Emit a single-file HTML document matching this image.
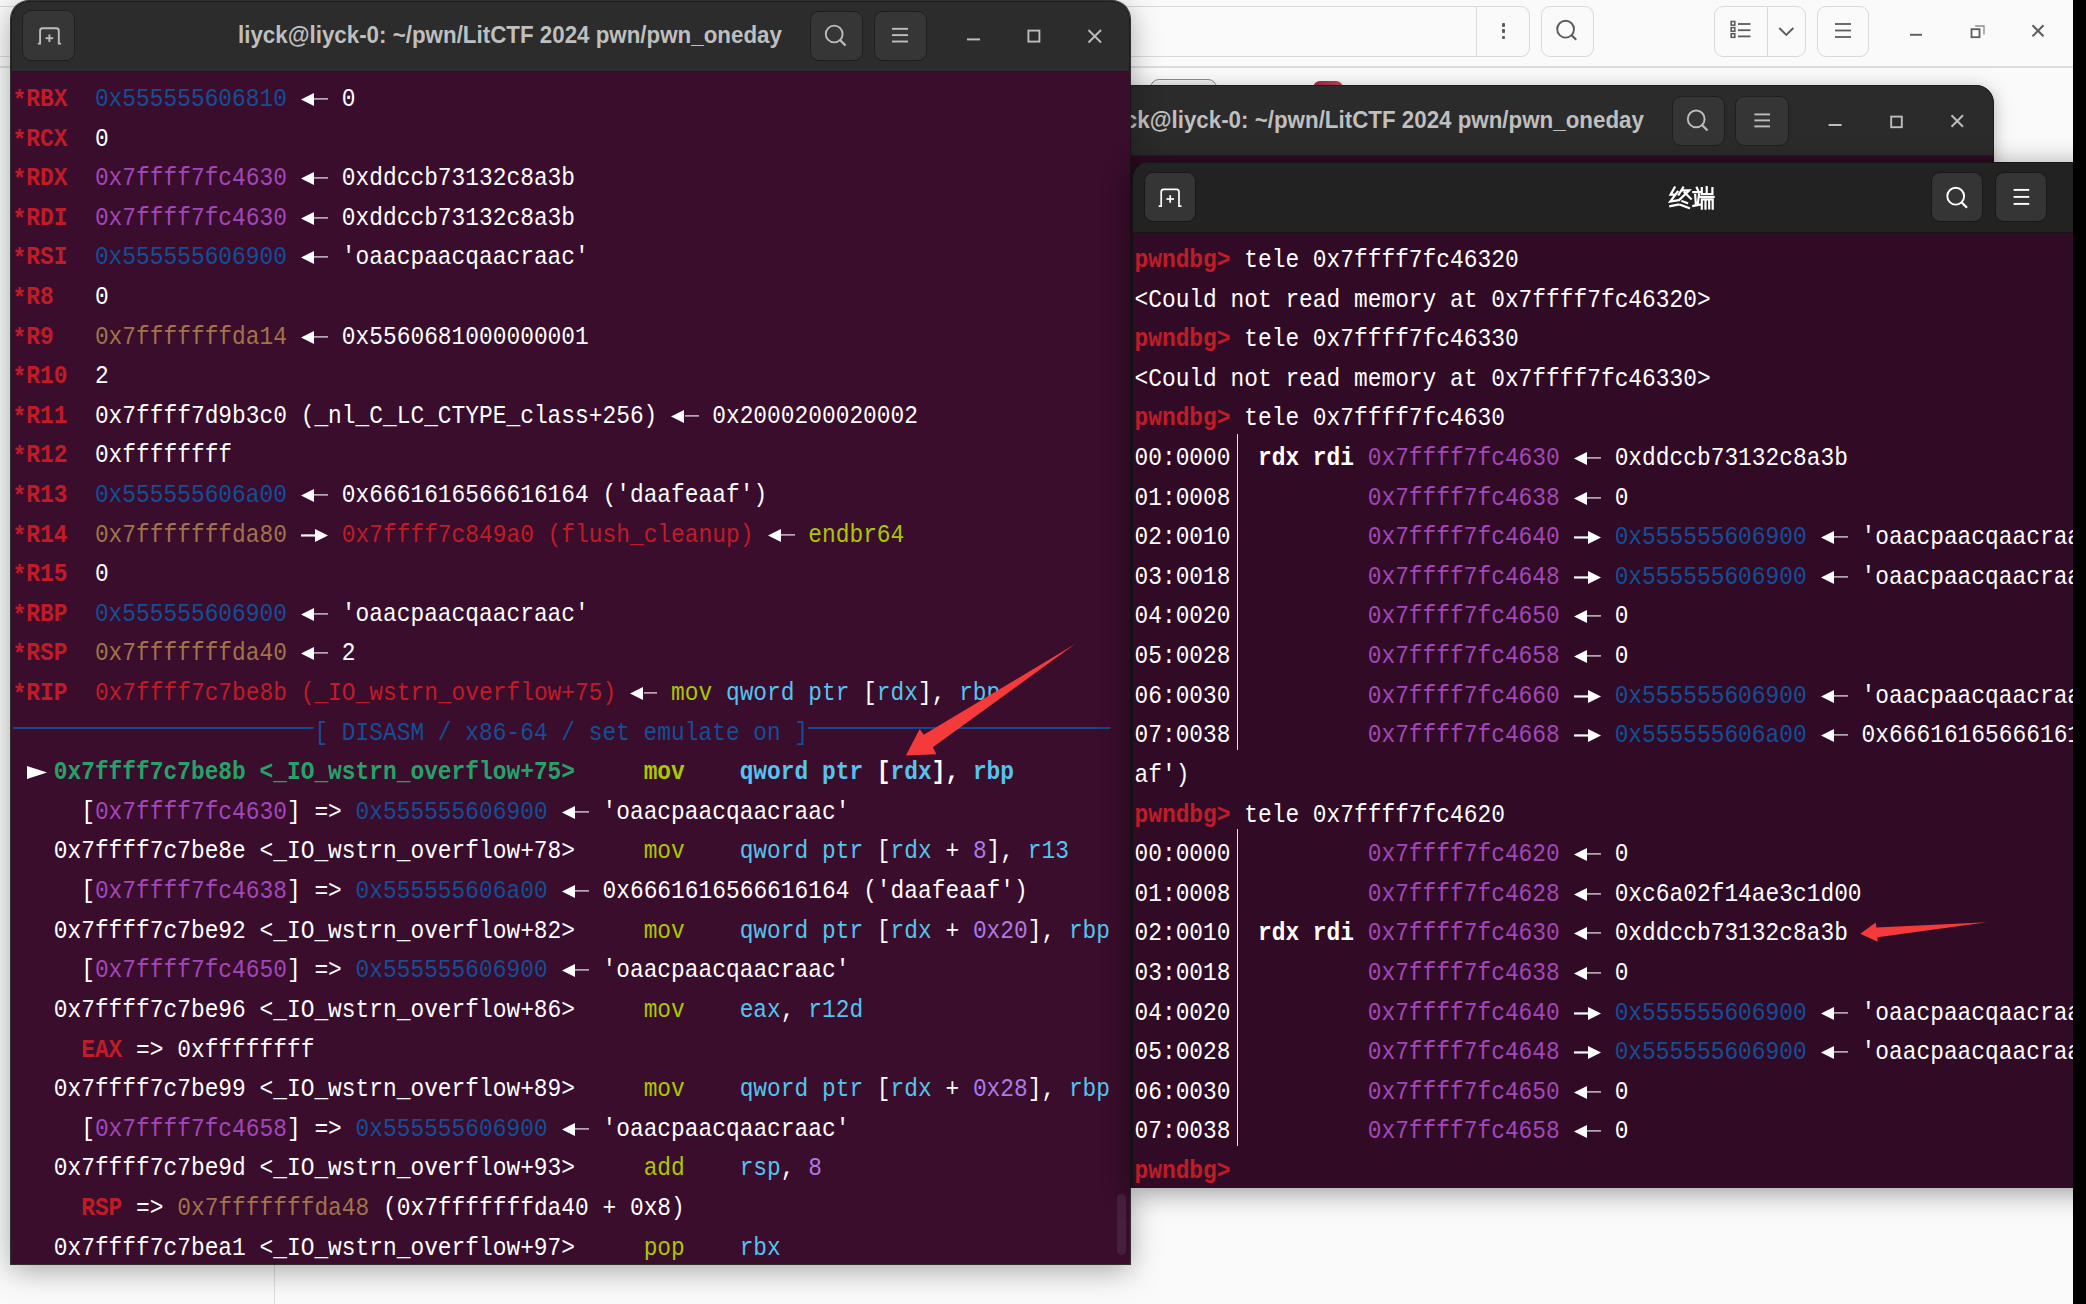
<!DOCTYPE html>
<html><head><meta charset="utf-8">
<style>
*{box-sizing:border-box;margin:0;padding:0}
html,body{width:2086px;height:1304px;overflow:hidden;background:#fafafa;position:relative}
.abs{position:absolute}
.ln{position:absolute;font-family:"Liberation Mono",monospace;font-size:22.863px;line-height:39.61px;height:39.61px;white-space:pre;color:#fff;transform:scaleY(1.09);transform-origin:0 25px}
.r{color:#c01c28;font-weight:bold}
.rc{color:#c01c28}
.b{color:#154e96}
.m{color:#a347ba}
.y{color:#a2734c}
.g{color:#26a269}
.yg{color:#aac800}
.c{color:#55c3ee}
.p{color:#ad7ae6}
.bo{font-weight:bold}
.ast{position:relative;top:1.8px}
.la,.ra,.tri{display:inline-block;position:relative;height:0;vertical-align:baseline}
.la,.ra{width:27.44px}
.tri{width:13.72px}
.la:before{content:"";position:absolute;left:0.4px;bottom:0.5px;width:0;height:0;border-right:13.3px solid #fff;border-top:6.1px solid transparent;border-bottom:6.1px solid transparent}
.la:after{content:"";position:absolute;left:13.6px;width:13.9px;bottom:5.6px;height:1.9px;background:#fff}
.ra:before{content:"";position:absolute;left:14.2px;bottom:0.2px;width:0;height:0;border-left:13.1px solid #fff;border-top:6.3px solid transparent;border-bottom:6.3px solid transparent}
.ra:after{content:"";position:absolute;left:0.4px;width:14px;bottom:5.5px;height:1.9px;background:#fff}
.tri:before{content:"";position:absolute;left:0.7px;bottom:0.3px;width:0;height:0;border-left:20.3px solid #fff;border-top:6.3px solid transparent;border-bottom:6.3px solid transparent}
.hdr-title{position:absolute;font-family:"Liberation Sans",sans-serif;font-weight:bold;white-space:pre;transform:scaleX(0.931);transform-origin:0 0}
.btn{position:absolute;border-radius:9px}
</style></head><body>

<!-- background (file manager) window header -->
<div class="abs" style="left:0;top:0;width:2073px;height:67.5px;background:#fafafa;border-bottom:2px solid #dcdcdc"></div>
<div class="abs" style="left:-200px;top:6px;width:1730px;height:50.5px;border:1.5px solid #d9d9d9;border-radius:9px;background:#fafafa"></div>
<div class="abs" style="left:1475.6px;top:6px;width:1.5px;height:50.5px;background:#d9d9d9"></div>
<div class="abs" style="left:1501.5px;top:23.3px;width:3.6px;height:3.6px;background:#5c5c5c;border-radius:1px"></div>
<div class="abs" style="left:1501.5px;top:29.4px;width:3.6px;height:3.6px;background:#5c5c5c;border-radius:1px"></div>
<div class="abs" style="left:1501.5px;top:35.5px;width:3.6px;height:3.6px;background:#5c5c5c;border-radius:1px"></div>
<div class="abs" style="left:1540.5px;top:6px;width:53.5px;height:50.5px;border:1.5px solid #d9d9d9;border-radius:9px"></div>
<svg class="abs" style="left:1540px;top:6px" width="54" height="51" viewBox="0 0 54 51"><circle cx="25.6" cy="23.2" r="8.4" fill="none" stroke="#5c5c5c" stroke-width="1.9"/><line x1="31.6" y1="29.2" x2="36.2" y2="33.8" stroke="#5c5c5c" stroke-width="2.2"/></svg>
<div class="abs" style="left:1713.8px;top:5.6px;width:91.8px;height:51px;border:1.5px solid #d9d9d9;border-radius:9px"></div>
<div class="abs" style="left:1766.8px;top:5.6px;width:1.5px;height:51px;background:#d9d9d9"></div>
<svg class="abs" style="left:1713px;top:5px" width="93" height="52" viewBox="0 0 93 52">
 <g fill="none" stroke="#5c5c5c" stroke-width="1.6"><rect x="18.2" y="16.5" width="3.6" height="3.6"/><rect x="18.2" y="22.6" width="3.6" height="3.6"/><rect x="18.2" y="28.7" width="3.6" height="3.6"/></g>
 <g stroke="#5c5c5c" stroke-width="1.8"><line x1="25" y1="19" x2="37.5" y2="19"/><line x1="25" y1="25.2" x2="37.5" y2="25.2"/><line x1="25" y1="31.4" x2="37.5" y2="31.4"/></g>
 <polyline points="66.3,23 73.3,30 80.3,23" fill="none" stroke="#5c5c5c" stroke-width="1.9"/>
</svg>
<div class="abs" style="left:1816.6px;top:5.6px;width:52.7px;height:51px;border:1.5px solid #d9d9d9;border-radius:9px"></div>
<svg class="abs" style="left:1816px;top:5px" width="54" height="52" viewBox="0 0 54 52"><g stroke="#5c5c5c" stroke-width="1.8"><line x1="19" y1="19" x2="35" y2="19"/><line x1="19" y1="25.5" x2="35" y2="25.5"/><line x1="19" y1="32" x2="35" y2="32"/></g></svg>
<svg class="abs" style="left:1900px;top:15px" width="160" height="35" viewBox="0 0 160 35">
 <line x1="10" y1="19.8" x2="22" y2="19.8" stroke="#5c5c5c" stroke-width="1.9"/>
 <rect x="71.5" y="14.2" width="8" height="8" fill="none" stroke="#5c5c5c" stroke-width="1.8"/>
 <polyline points="75.2,11 84,11 84,19.5" fill="none" stroke="#8a8a8a" stroke-width="1.3"/>
 <g stroke="#5c5c5c" stroke-width="2"><line x1="132.5" y1="10.3" x2="143.5" y2="21.3"/><line x1="143.5" y1="10.3" x2="132.5" y2="21.3"/></g>
</svg>
<!-- bg content bits -->
<div class="abs" style="left:1150px;top:79px;width:67px;height:30px;border:1.5px solid #8c8c8c;border-radius:9px;background:linear-gradient(#f2f2f2,#c4c4c4)"></div>
<div class="abs" style="left:1313px;top:81px;width:30px;height:30px;border-radius:7px 7px 0 0;background:linear-gradient(90deg,#9a2848,#c04850)"></div>
<div class="abs" style="left:274px;top:1262px;width:1.3px;height:50px;background:#dcdcdc"></div>

<!-- middle terminal (behind) -->
<div class="abs" style="left:600px;top:85px;width:1393.5px;height:120px;background:linear-gradient(#1e1e1e 0,#1e1e1e 70px,#300a24 70px);border-radius:0 18px 0 0;overflow:hidden;box-shadow:0 3px 18px rgba(0,0,0,0.28)">
 <div class="abs" style="left:0;top:0;width:100%;height:71px;background:#2b2b2b;border:1px solid #1e1e1e;border-radius:0 18px 0 0"></div>
</div>
<div class="hdr-title" id="t2" style="left:1100.3px;top:100.3px;font-size:24px;line-height:40px;color:#bfbfbf">liyck@liyck-0: ~/pwn/LitCTF 2024 pwn/pwn_oneday</div>
<div class="btn" style="left:1671.6px;top:95.7px;width:53px;height:50.4px;background:#353535;border:1px solid #1f1f1f"></div>
<div class="btn" style="left:1735.4px;top:95.7px;width:53.6px;height:50.4px;background:#353535;border:1px solid #1f1f1f"></div>
<svg class="abs" style="left:1660px;top:90px" width="330" height="60" viewBox="0 0 330 60">
 <g stroke="#bdbdbd" fill="none" stroke-width="1.9">
  <circle cx="36.2" cy="28.9" r="8.4"/><line x1="42" y1="35" x2="47.5" y2="40.5" stroke-width="2.3"/>
  <line x1="94.4" y1="24.4" x2="110" y2="24.4"/><line x1="94.4" y1="30.4" x2="110" y2="30.4"/><line x1="94.4" y1="36.4" x2="110" y2="36.4"/>
  <line x1="168.6" y1="35" x2="181.6" y2="35" stroke-width="2"/>
  <rect x="231.2" y="26.6" width="10.6" height="10.6"/>
  <line x1="291.5" y1="25.3" x2="303" y2="36.8" stroke-width="2"/><line x1="303" y1="25.3" x2="291.5" y2="36.8" stroke-width="2"/>
 </g>
</svg>

<!-- left terminal -->
<div class="abs" id="lt" style="left:11.2px;top:0.5px;width:1118.8px;height:1263.4px;background:linear-gradient(#1d1d1d 0,#1d1d1d 70px,#390d2b 70px);border-radius:18px 18px 0 0;overflow:hidden;box-shadow:0 0 0 1px rgba(20,20,20,0.85),0 6px 30px rgba(0,0,0,0.35)">
 <div class="abs" style="left:0;top:0;width:100%;height:71.5px;background:#2c2c2c;border:1px solid #1d1d1d;border-radius:18px 18px 0 0"></div>
 <div class="abs" style="left:1106px;top:1193.5px;width:8.6px;height:60.5px;border-radius:4.3px;background:#45203b"></div>
</div>
<div class="btn" style="left:21.8px;top:10.4px;width:53.4px;height:50.6px;background:#363636;border:1px solid #1f1f1f"></div>
<div class="btn" style="left:809.7px;top:10.9px;width:53.2px;height:50.1px;background:#363636;border:1px solid #1f1f1f"></div>
<div class="btn" style="left:873.6px;top:10.9px;width:53.2px;height:50.1px;background:#363636;border:1px solid #1f1f1f"></div>
<svg class="abs" style="left:0;top:0" width="1131" height="72" viewBox="0 0 1131 72">
 <g stroke="#bdbdbd" fill="none" stroke-width="1.9">
  <path d="M37.8,43.6 H40.1 V30.7 Q40.1,28.2 42.6,28.2 H56.3 Q58.8,28.2 58.8,30.7 V43.6 H61.1"/>
  <line x1="49.4" y1="34.4" x2="49.4" y2="42"/><line x1="45.6" y1="38.2" x2="53.2" y2="38.2"/>
  <circle cx="834.2" cy="34" r="8.4"/><line x1="840" y1="40" x2="845.5" y2="45.5" stroke-width="2.3"/>
  <line x1="892" y1="28.8" x2="908" y2="28.8"/><line x1="892" y1="35.1" x2="908" y2="35.1"/><line x1="892" y1="41.5" x2="908" y2="41.5"/>
  <line x1="967" y1="39.4" x2="980" y2="39.4" stroke-width="2"/>
  <rect x="1028.4" y="30.6" width="11" height="11"/>
  <line x1="1088.5" y1="30" x2="1101" y2="42.5" stroke-width="2"/><line x1="1101" y1="30" x2="1088.5" y2="42.5" stroke-width="2"/>
 </g>
</svg>
<div class="hdr-title" id="t1" style="left:237.8px;top:15.3px;font-size:24px;line-height:40px;color:#bfbfbf">liyck@liyck-0: ~/pwn/LitCTF 2024 pwn/pwn_oneday</div>
<!-- disasm separator -->
<div class="abs" style="left:13px;top:727px;width:301px;height:2px;background:#12488b"></div>
<div class="abs" style="left:808px;top:727px;width:302px;height:2px;background:#12488b"></div>
<div class="ln" style="left:12.60px;top:80.90px"><span class="r ast">*</span><span class="r">RBX</span>  <span class="b">0x555555606810</span> <i class="la"></i> 0</div>
<div class="ln" style="left:12.60px;top:120.51px"><span class="r ast">*</span><span class="r">RCX</span>  0</div>
<div class="ln" style="left:12.60px;top:160.12px"><span class="r ast">*</span><span class="r">RDX</span>  <span class="m">0x7ffff7fc4630</span> <i class="la"></i> 0xddccb73132c8a3b</div>
<div class="ln" style="left:12.60px;top:199.73px"><span class="r ast">*</span><span class="r">RDI</span>  <span class="m">0x7ffff7fc4630</span> <i class="la"></i> 0xddccb73132c8a3b</div>
<div class="ln" style="left:12.60px;top:239.34px"><span class="r ast">*</span><span class="r">RSI</span>  <span class="b">0x555555606900</span> <i class="la"></i> 'oaacpaacqaacraac'</div>
<div class="ln" style="left:12.60px;top:278.95px"><span class="r ast">*</span><span class="r">R8</span>   0</div>
<div class="ln" style="left:12.60px;top:318.56px"><span class="r ast">*</span><span class="r">R9</span>   <span class="y">0x7fffffffda14</span> <i class="la"></i> 0x5560681000000001</div>
<div class="ln" style="left:12.60px;top:358.17px"><span class="r ast">*</span><span class="r">R10</span>  2</div>
<div class="ln" style="left:12.60px;top:397.78px"><span class="r ast">*</span><span class="r">R11</span>  0x7ffff7d9b3c0 (_nl_C_LC_CTYPE_class+256) <i class="la"></i> 0x2000200020002</div>
<div class="ln" style="left:12.60px;top:437.39px"><span class="r ast">*</span><span class="r">R12</span>  0xffffffff</div>
<div class="ln" style="left:12.60px;top:477.00px"><span class="r ast">*</span><span class="r">R13</span>  <span class="b">0x555555606a00</span> <i class="la"></i> 0x6661616566616164 ('daafeaaf')</div>
<div class="ln" style="left:12.60px;top:516.61px"><span class="r ast">*</span><span class="r">R14</span>  <span class="y">0x7fffffffda80</span> <i class="ra"></i> <span class="rc">0x7ffff7c849a0 (flush_cleanup)</span> <i class="la"></i> <span class="yg">endbr64</span></div>
<div class="ln" style="left:12.60px;top:556.22px"><span class="r ast">*</span><span class="r">R15</span>  0</div>
<div class="ln" style="left:12.60px;top:595.83px"><span class="r ast">*</span><span class="r">RBP</span>  <span class="b">0x555555606900</span> <i class="la"></i> 'oaacpaacqaacraac'</div>
<div class="ln" style="left:12.60px;top:635.44px"><span class="r ast">*</span><span class="r">RSP</span>  <span class="y">0x7fffffffda40</span> <i class="la"></i> 2</div>
<div class="ln" style="left:12.60px;top:675.05px"><span class="r ast">*</span><span class="r">RIP</span>  <span class="rc">0x7ffff7c7be8b (_IO_wstrn_overflow+75)</span> <i class="la"></i> <span class="yg">mov</span> <span class="c">qword ptr</span> [<span class="c">rdx</span>], <span class="c">rbp</span></div>
<div class="ln" style="left:12.60px;top:714.66px">                      <span class="b">[ DISASM / x86-64 / set emulate on ]</span></div>
<div class="ln" style="left:12.60px;top:754.27px"> <i class="tri"></i> <span class="g bo">0x7ffff7c7be8b &lt;_IO_wstrn_overflow+75&gt;</span>     <span class="yg bo">mov</span>    <span class="c bo">qword ptr</span><span class="bo"> </span><span class="bo">[</span><span class="c bo">rdx</span><span class="bo">],</span> <span class="c bo">rbp</span></div>
<div class="ln" style="left:12.60px;top:793.88px">     [<span class="m">0x7ffff7fc4630</span>] =&gt; <span class="b">0x555555606900</span> <i class="la"></i> 'oaacpaacqaacraac'</div>
<div class="ln" style="left:12.60px;top:833.49px">   0x7ffff7c7be8e &lt;_IO_wstrn_overflow+78&gt;     <span class="yg">mov</span>    <span class="c">qword ptr</span> [<span class="c">rdx</span> + <span class="p">8</span>], <span class="c">r13</span></div>
<div class="ln" style="left:12.60px;top:873.10px">     [<span class="m">0x7ffff7fc4638</span>] =&gt; <span class="b">0x555555606a00</span> <i class="la"></i> 0x6661616566616164 ('daafeaaf')</div>
<div class="ln" style="left:12.60px;top:912.71px">   0x7ffff7c7be92 &lt;_IO_wstrn_overflow+82&gt;     <span class="yg">mov</span>    <span class="c">qword ptr</span> [<span class="c">rdx</span> + <span class="p">0x20</span>], <span class="c">rbp</span></div>
<div class="ln" style="left:12.60px;top:952.32px">     [<span class="m">0x7ffff7fc4650</span>] =&gt; <span class="b">0x555555606900</span> <i class="la"></i> 'oaacpaacqaacraac'</div>
<div class="ln" style="left:12.60px;top:991.93px">   0x7ffff7c7be96 &lt;_IO_wstrn_overflow+86&gt;     <span class="yg">mov</span>    <span class="c">eax</span>, <span class="c">r12d</span></div>
<div class="ln" style="left:12.60px;top:1031.54px">     <span class="r">EAX</span> =&gt; 0xffffffff</div>
<div class="ln" style="left:12.60px;top:1071.15px">   0x7ffff7c7be99 &lt;_IO_wstrn_overflow+89&gt;     <span class="yg">mov</span>    <span class="c">qword ptr</span> [<span class="c">rdx</span> + <span class="p">0x28</span>], <span class="c">rbp</span></div>
<div class="ln" style="left:12.60px;top:1110.76px">     [<span class="m">0x7ffff7fc4658</span>] =&gt; <span class="b">0x555555606900</span> <i class="la"></i> 'oaacpaacqaacraac'</div>
<div class="ln" style="left:12.60px;top:1150.37px">   0x7ffff7c7be9d &lt;_IO_wstrn_overflow+93&gt;     <span class="yg">add</span>    <span class="c">rsp</span>, <span class="p">8</span></div>
<div class="ln" style="left:12.60px;top:1189.98px">     <span class="r">RSP</span> =&gt; <span class="y">0x7fffffffda48</span> (0x7fffffffda40 + 0x8)</div>
<div class="ln" style="left:12.60px;top:1229.59px">   0x7ffff7c7bea1 &lt;_IO_wstrn_overflow+97&gt;     <span class="yg">pop</span>    <span class="c">rbx</span></div>

<!-- right terminal -->
<div class="abs" style="left:1130px;top:161.5px;width:1000px;height:1026.8px;background:linear-gradient(#161616 0,#161616 70px,#310b25 70px);border-radius:18px 0 0 0;overflow:hidden;box-shadow:0 4px 28px rgba(0,0,0,0.4);border-left:3px solid #161016">
 <div class="abs" style="left:0;top:0;width:100%;height:71.5px;background:#222222;border-top:1px solid #161616;border-bottom:1px solid #161616"></div>
 <div class="abs" style="left:103.8px;top:272px;width:1.5px;height:316px;background:#e0e0e0"></div>
 <div class="abs" style="left:103.8px;top:667.5px;width:1.5px;height:317px;background:#e0e0e0"></div>
</div>
<div class="btn" style="left:1143.7px;top:172.4px;width:52.2px;height:49.4px;background:#353535;border:1px solid #181818"></div>
<div class="btn" style="left:1930.8px;top:172.4px;width:52.5px;height:49.4px;background:#353535;border:1px solid #181818"></div>
<div class="btn" style="left:1994.9px;top:172.4px;width:52.4px;height:49.4px;background:#353535;border:1px solid #181818"></div>
<svg class="abs" style="left:1140px;top:165px" width="940" height="65" viewBox="0 0 940 65">
 <g stroke="#ffffff" fill="none" stroke-width="1.9">
  <path d="M18.7,41.1 H21.2 V26.9 Q21.2,24.4 23.7,24.4 H36.5 Q39,24.4 39,26.9 V41.1 H41.5" stroke-width="1.7"/>
  <line x1="30.2" y1="30.2" x2="30.2" y2="37.8" stroke-width="1.7"/><line x1="26.4" y1="34" x2="34" y2="34" stroke-width="1.7"/>
  <circle cx="815.7" cy="31.2" r="8.4"/><line x1="821.5" y1="37.3" x2="827" y2="42.8" stroke-width="2.3"/>
  <line x1="873.6" y1="24.9" x2="889.2" y2="24.9"/><line x1="873.6" y1="31.9" x2="889.2" y2="31.9"/><line x1="873.6" y1="38.9" x2="889.2" y2="38.9"/>
 </g>
</svg>
<svg class="abs" style="left:1668px;top:185px" width="48" height="26" viewBox="0 0 48 26">
 <path d="M6.6,2.5 L2.6,9.6 L7.6,9.3 M9.5,6.8 L2.3,16.5 L9.5,15.3 M2.3,21.2 L10.1,19.6 M15.1,2.5 L10.7,9.6 M14.4,5.3 L21.3,5.3 L11.3,14.9 M16.6,7.5 L22.9,13.7 M14.4,16.2 L19.1,18.1 M12.3,19.9 L21.0,23.0 M28.8,2.8 L30.0,5.3 M25.3,7.2 L31.9,7.2 M27.2,10.0 L27.8,19.0 M31.0,9.6 L29.7,19.0 M25.3,20.9 L31.9,19.6 M33.8,3.1 L33.8,9.0 L44.4,9.0 L44.4,3.1 M38.7,2.2 L38.7,9.0 M32.8,11.8 L45.6,11.8 M33.8,14.3 L44.7,14.3 L44.7,23.7 M33.8,14.3 L33.8,23.7 M37.5,14.3 L37.5,23.7 M41.2,14.3 L41.2,23.4" fill="none" stroke="#fff" stroke-width="2.2" stroke-linecap="square" stroke-linejoin="miter"/>
</svg>
<div class="ln" style="left:1134.50px;top:242.00px"><span class="r">pwndbg&gt;</span> tele 0x7ffff7fc46320</div>
<div class="ln" style="left:1134.50px;top:281.61px">&lt;Could not read memory at 0x7ffff7fc46320&gt;</div>
<div class="ln" style="left:1134.50px;top:321.22px"><span class="r">pwndbg&gt;</span> tele 0x7ffff7fc46330</div>
<div class="ln" style="left:1134.50px;top:360.83px">&lt;Could not read memory at 0x7ffff7fc46330&gt;</div>
<div class="ln" style="left:1134.50px;top:400.44px"><span class="r">pwndbg&gt;</span> tele 0x7ffff7fc4630</div>
<div class="ln" style="left:1134.50px;top:440.05px">00:0000  <span class="bo">rdx rdi</span> <span class="m">0x7ffff7fc4630</span> <i class="la"></i> 0xddccb73132c8a3b</div>
<div class="ln" style="left:1134.50px;top:479.66px">01:0008          <span class="m">0x7ffff7fc4638</span> <i class="la"></i> 0</div>
<div class="ln" style="left:1134.50px;top:519.27px">02:0010          <span class="m">0x7ffff7fc4640</span> <i class="ra"></i> <span class="b">0x555555606900</span> <i class="la"></i> 'oaacpaacqaacraac'</div>
<div class="ln" style="left:1134.50px;top:558.88px">03:0018          <span class="m">0x7ffff7fc4648</span> <i class="ra"></i> <span class="b">0x555555606900</span> <i class="la"></i> 'oaacpaacqaacraac'</div>
<div class="ln" style="left:1134.50px;top:598.49px">04:0020          <span class="m">0x7ffff7fc4650</span> <i class="la"></i> 0</div>
<div class="ln" style="left:1134.50px;top:638.10px">05:0028          <span class="m">0x7ffff7fc4658</span> <i class="la"></i> 0</div>
<div class="ln" style="left:1134.50px;top:677.71px">06:0030          <span class="m">0x7ffff7fc4660</span> <i class="ra"></i> <span class="b">0x555555606900</span> <i class="la"></i> 'oaacpaacqaacraac'</div>
<div class="ln" style="left:1134.50px;top:717.32px">07:0038          <span class="m">0x7ffff7fc4668</span> <i class="ra"></i> <span class="b">0x555555606a00</span> <i class="la"></i> 0x6661616566616164 ('daafea</div>
<div class="ln" style="left:1134.50px;top:756.93px">af')</div>
<div class="ln" style="left:1134.50px;top:796.54px"><span class="r">pwndbg&gt;</span> tele 0x7ffff7fc4620</div>
<div class="ln" style="left:1134.50px;top:836.15px">00:0000          <span class="m">0x7ffff7fc4620</span> <i class="la"></i> 0</div>
<div class="ln" style="left:1134.50px;top:875.76px">01:0008          <span class="m">0x7ffff7fc4628</span> <i class="la"></i> 0xc6a02f14ae3c1d00</div>
<div class="ln" style="left:1134.50px;top:915.37px">02:0010  <span class="bo">rdx rdi</span> <span class="m">0x7ffff7fc4630</span> <i class="la"></i> 0xddccb73132c8a3b</div>
<div class="ln" style="left:1134.50px;top:954.98px">03:0018          <span class="m">0x7ffff7fc4638</span> <i class="la"></i> 0</div>
<div class="ln" style="left:1134.50px;top:994.59px">04:0020          <span class="m">0x7ffff7fc4640</span> <i class="ra"></i> <span class="b">0x555555606900</span> <i class="la"></i> 'oaacpaacqaacraac'</div>
<div class="ln" style="left:1134.50px;top:1034.20px">05:0028          <span class="m">0x7ffff7fc4648</span> <i class="ra"></i> <span class="b">0x555555606900</span> <i class="la"></i> 'oaacpaacqaacraac'</div>
<div class="ln" style="left:1134.50px;top:1073.81px">06:0030          <span class="m">0x7ffff7fc4650</span> <i class="la"></i> 0</div>
<div class="ln" style="left:1134.50px;top:1113.42px">07:0038          <span class="m">0x7ffff7fc4658</span> <i class="la"></i> 0</div>
<div class="ln" style="left:1134.50px;top:1153.03px"><span class="r">pwndbg&gt;</span></div>

<!-- annotation arrows -->
<svg class="abs" style="left:0;top:0" width="2086" height="1304" viewBox="0 0 2086 1304">
 <path d="M1075.5,643.8 L932.9,747.3 L936.4,754.2 L905.9,755.4 L919.7,728.9 L923.7,734.7 Z" fill="#f43a3a"/>
 <path d="M1986.9,922.2 L1876.4,927.6 L1875.7,922.6 L1860.3,933.7 L1877.6,941.8 L1877.6,937.2 Z" fill="#f43a3a"/>
</svg>

<!-- screen edge -->
<div class="abs" style="left:2073px;top:0;width:13px;height:1304px;background:#000"></div>
</body></html>
